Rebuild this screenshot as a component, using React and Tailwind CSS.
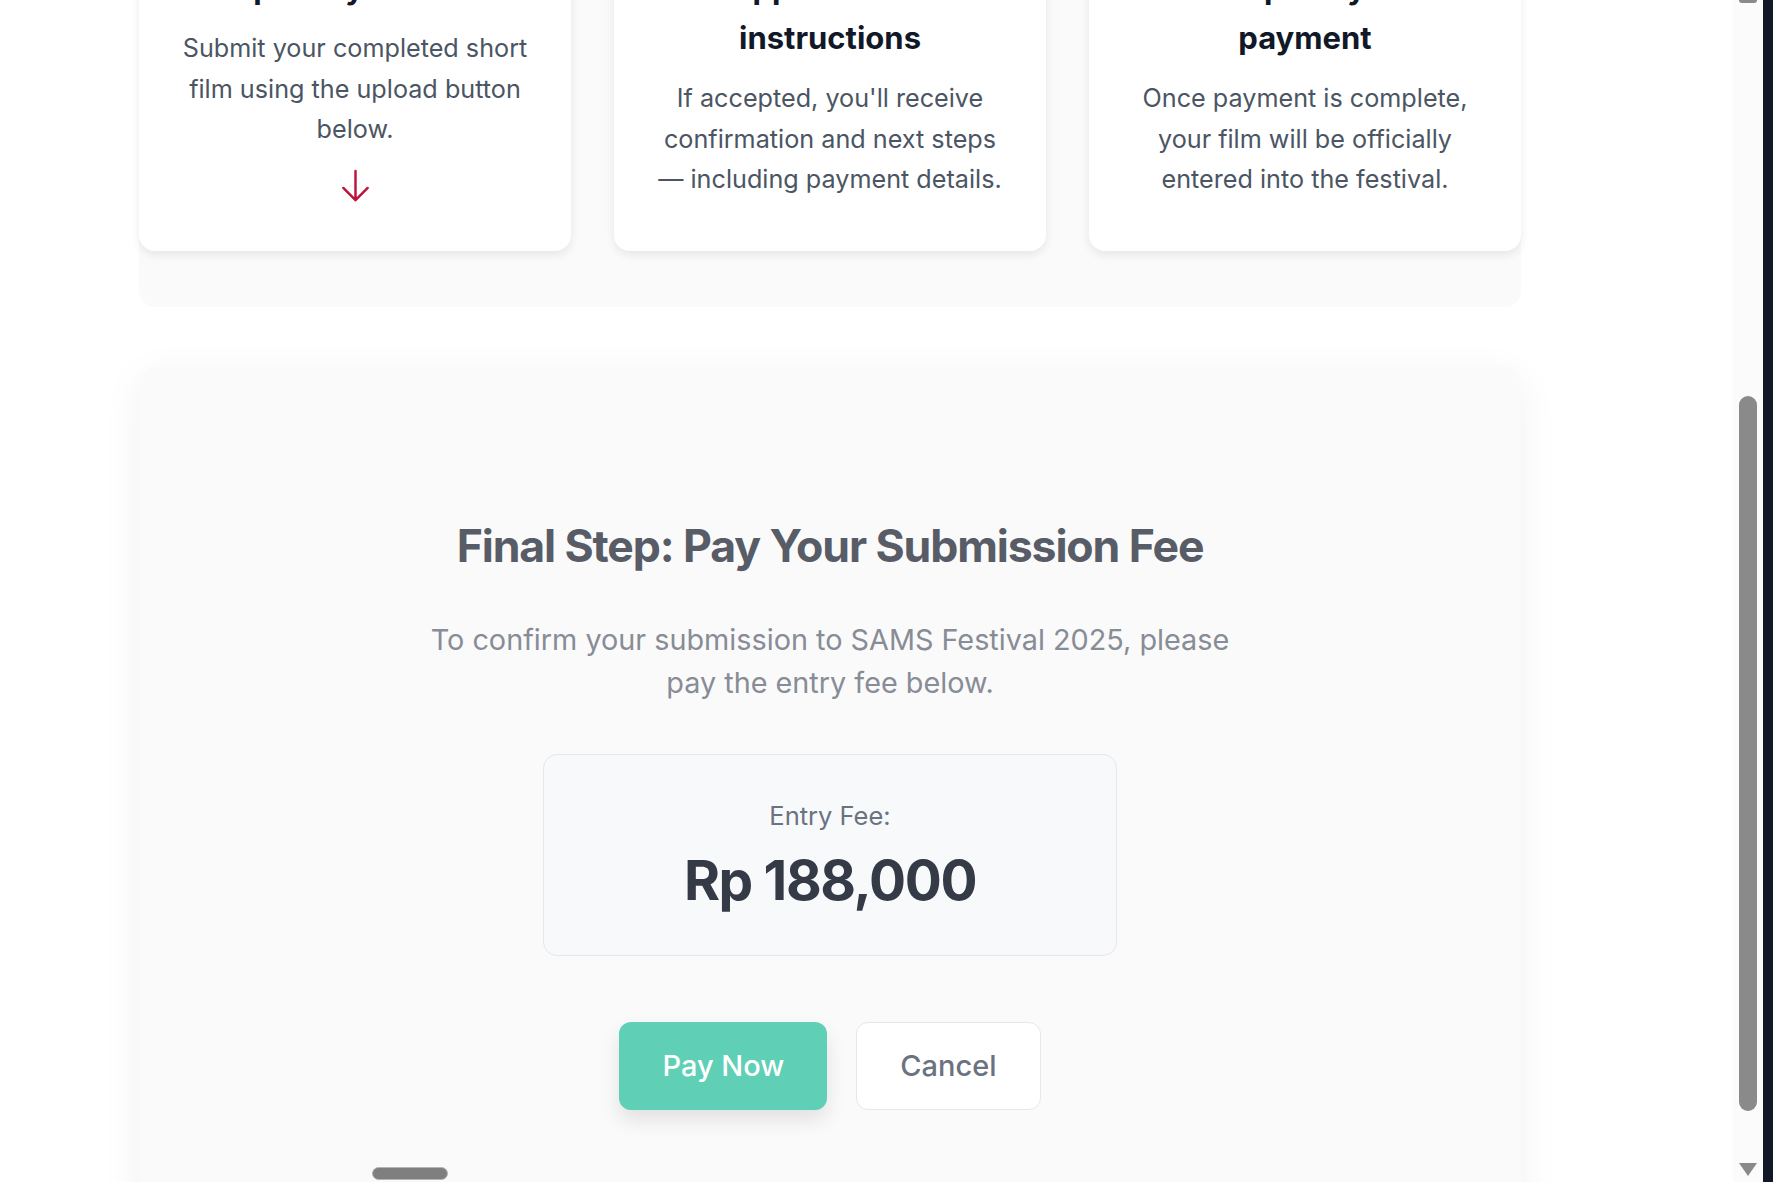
import React from "react";

const steps = [
  {
    title: ["Upload your film"],
    body: ["Submit your completed short", "film using the upload button", "below."],
    arrow: true,
  },
  {
    title: ["Approval and", "instructions"],
    body: ["If accepted, you'll receive", "confirmation and next steps", "— including payment details."],
  },
  {
    title: ["Complete your", "payment"],
    body: ["Once payment is complete,", "your film will be officially", "entered into the festival."],
  },
];

const StepCard = ({ step }) => (
  <div className="rounded-2xl bg-white px-[30px] pt-[39px] pb-[46px] text-center shadow-[0_4px_10px_rgba(0,0,0,0.08)]">
    <h3 className="mb-[15px] text-[31px] leading-[50px] font-bold text-[#111827]">
      {step.title.map((line, i) => (
        <span key={i} className="block">
          {line}
        </span>
      ))}
    </h3>
    <p className="text-[25.2px] leading-[40.7px] text-[#4b5563]">
      {step.body.map((line, i) => (
        <span key={i} className="block whitespace-nowrap">
          {line}
        </span>
      ))}
    </p>
    {step.arrow && (
      <svg
        viewBox="0 0 24 24"
        fill="none"
        stroke="#be123c"
        strokeWidth="1.5"
        strokeLinecap="round"
        strokeLinejoin="round"
        className="mx-auto mt-[16px] h-[39px] w-[39px]"
      >
        <path d="M19.5 13.5 12 21m0 0-7.5-7.5M12 21V3" />
      </svg>
    )}
  </div>
);

export default function App() {
  return (
    <div className="flex h-[1182px] w-[1773px] overflow-hidden bg-white font-['Inter',sans-serif]">
      <main className="relative flex-1 overflow-hidden">
        <div className="-mt-[76px] ml-[139px] w-[1382px]">
          {/* steps */}
          <section className="rounded-2xl bg-[#fafafa] pb-[56px]">
            <div className="grid grid-cols-3 gap-[43px]">
              {steps.map((s, i) => (
                <StepCard key={i} step={s} />
              ))}
            </div>
          </section>

          {/* payment */}
          <section className="mt-[59px] rounded-[20px] bg-[#fafafa] pt-[154px] pb-[120px] text-center shadow-[0_10px_40px_rgba(0,0,0,0.06)]">
            <h2 className="text-[44.6px] leading-[53px] font-bold tracking-tight text-[#575c67]">
              Final Step: Pay Your Submission Fee
            </h2>
            <p className="mt-[45px] text-[28.8px] leading-[43px] text-[#878c96]">
              To confirm your submission to SAMS Festival 2025, please
              <br />
              pay the entry fee below.
            </p>

            <div className="mx-auto mt-[50px] w-[574px] rounded-[14px] border border-[#e5e7eb] bg-[#f8f9fb] pt-[42px] pb-[42px]">
              <div className="text-[25.5px] leading-[38px] text-[#6b7280]">Entry Fee:</div>
              <div className="mt-[12px] text-[55px] leading-[66px] font-bold tracking-tight text-[#343a46]">
                Rp 188,000
              </div>
            </div>

            <div className="mt-[66px] flex justify-center gap-[29px]">
              <button className="h-[88px] rounded-xl bg-[#5fcfb6] px-[43px] text-[29px] font-medium text-white shadow-[0_10px_20px_rgba(0,0,0,0.1)]">
                Pay Now
              </button>
              <button className="h-[88px] rounded-xl border border-[#e5e7eb] bg-white px-[43px] text-[29px] font-medium text-[#6b7280]">
                Cancel
              </button>
            </div>
          </section>
        </div>

        {/* horizontal scroll thumb */}
        <div className="absolute top-[1167px] left-[372px] h-[13px] w-[76px] rounded-full border border-[#b5b5b5] bg-[#7f7f7f]" />
      </main>

      {/* vertical scrollbar */}
      <div className="flex w-[30px] flex-col items-center bg-[#fbfbfb]">
        <div className="h-[3px] w-[18px] rounded-b-full bg-[#8a8a8a]" />
        <div className="mt-[393px] h-[715px] w-[18px] rounded-full bg-[#8a8a8a]" />
        <div className="mt-[52px] h-0 w-0 border-t-[13px] border-r-[9px] border-l-[9px] border-t-[#8a8a8a] border-r-transparent border-l-transparent" />
      </div>
      <div className="w-[10px] bg-[#111827]" />
    </div>
  );
}
